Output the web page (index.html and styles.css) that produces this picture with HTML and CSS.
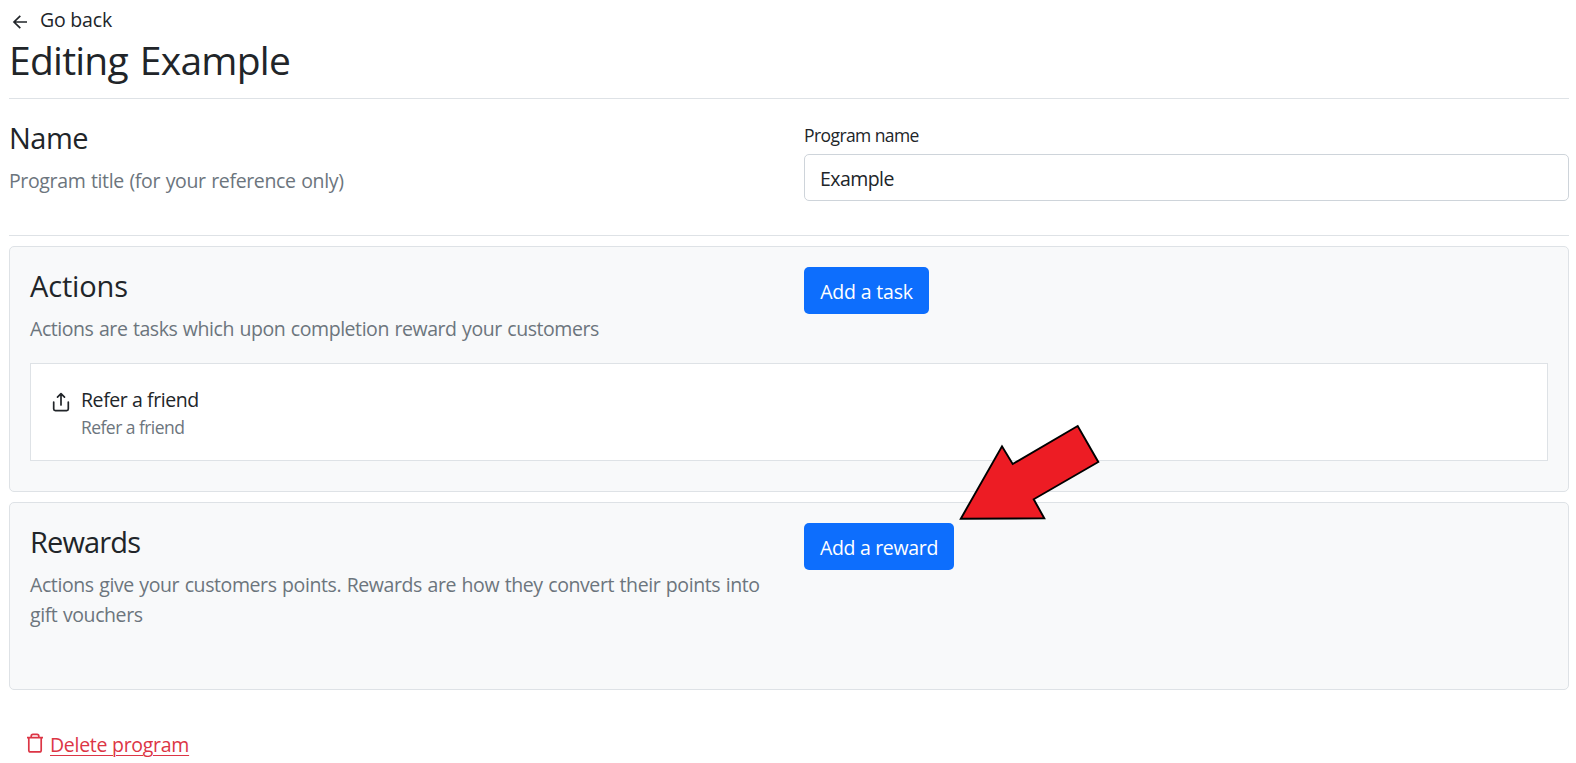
FILE: index.html
```html
<!DOCTYPE html>
<html lang="en">
<head>
<meta charset="utf-8">
<title>Editing Example</title>
<link rel="stylesheet" href="styles.css">
</head>
<body>
<main class="page">
  <header class="page-header">
    <a class="back" href="#">
      <svg class="back-icon" width="16" height="16" viewBox="0 0 16 16" fill="none" stroke="currentColor" stroke-width="1.7"><path d="M15 8H2.2M8.3 1.8 2 8l6.3 6.2"/></svg>
      <span>Go back</span>
    </a>
    <h1 class="page-title">Editing Example</h1>
  </header>

  <section class="name-section columns">
    <div>
      <h2 class="heading heading-name">Name</h2>
      <p class="lead lead-name">Program title (for your reference only)</p>
    </div>
    <div class="field">
      <label class="label" for="program-name">Program name</label>
      <input class="input" id="program-name" type="text" value="Example">
    </div>
  </section>

  <section class="card actions">
    <div class="columns">
      <div>
        <h2 class="heading">Actions</h2>
        <p class="lead">Actions are tasks which upon completion reward your customers</p>
      </div>
      <div><button class="button button-task" type="button">Add a task</button></div>
    </div>
    <div class="task">
      <svg class="task-icon" width="18" height="20" viewBox="0 0 18 20" fill="none" stroke="currentColor" stroke-width="1.7" stroke-linecap="round" stroke-linejoin="round"><path d="M9 13V2M5.5 5.2 9 1.7l3.5 3.5M1.7 10v7q0 1.6 1.6 1.6h11.4q1.6 0 1.6-1.6v-7"/></svg>
      <div>
        <div class="task-title">Refer a friend</div>
        <div class="task-note">Refer a friend</div>
      </div>
    </div>
  </section>

  <section class="card rewards">
    <div class="columns">
      <div>
        <h2 class="heading heading-rewards">Rewards</h2>
        <p class="lead lead-rewards">Actions give your customers points. Rewards are how they convert their points into gift vouchers</p>
      </div>
      <div><button class="button button-reward" type="button">Add a reward</button></div>
    </div>
  </section>

  <a class="delete" href="#">
    <svg class="delete-icon" width="18" height="20" viewBox="0 0 18 20" fill="none" stroke="currentColor" stroke-width="1.7"><path d="M1 4.6h16M5.2 4.4V3.2q0-1.8 1.8-1.8h4q1.8 0 1.8 1.8v1.2M2.8 4.8v12.4q0 1.7 1.7 1.7h9q1.7 0 1.7-1.7V4.8"/></svg>
    <span class="delete-text">Delete program</span>
  </a>
</main>
<svg class="pointer" width="142" height="98" viewBox="958 423 142 98"><path d="M960.8 518.7 1002 446.3l10.7 17.7 65-38 20.6 36-64.6 37.3 10.6 19Z" fill="#ed1c24" stroke="#000" stroke-width="1.9"/></svg>
</body>
</html>
```
FILE: styles.css
```css
* { box-sizing: border-box; }
body {
  margin: 0;
  background: #fff;
  color: #212529;
  font-family: "Open Sans", "Noto Sans", sans-serif;
  font-size: 19.5px;
  line-height: 30px;
  overflow: hidden;
}
h1, h2, p { margin: 0; font-weight: 400; }
.page { padding: 0 7px 0 9px; }
.page-header { height: 99px; padding-top: 5px; border-bottom: 1px solid #dee2e6; }
.back {
  display: flex;
  align-items: center;
  gap: 12px;
  height: 30px;
  padding-left: 3px;
  color: inherit;
  text-decoration: none;
  letter-spacing: -0.2px;
}
.back-icon { margin-top: 3px; }
.page-title {
  font-size: 39px;
  line-height: 48px;
  margin-top: 1px;
  letter-spacing: -0.75px;
  word-spacing: 2.5px;
}
.columns { display: grid; grid-template-columns: 1fr 1fr; column-gap: 30px; }
.name-section { height: 137px; padding-top: 20px; border-bottom: 1px solid #dee2e6; }
.heading { font-size: 29px; line-height: 38px; letter-spacing: -0.15px; }
.heading-name { letter-spacing: -0.5px; }
.heading-rewards { letter-spacing: -0.85px; }
.lead { margin-top: 9px; color: #6c757d; letter-spacing: -0.44px; word-spacing: 0.9px; }
.lead-name { letter-spacing: -0.36px; }
.lead-rewards { letter-spacing: -0.41px; }
.field { display: flex; flex-direction: column; padding-top: 3px; }
.label { font-size: 17.5px; line-height: 26px; letter-spacing: -0.58px; }
.input {
  height: 47px;
  margin-top: 6px;
  padding: 2px 15px 0;
  border: 1px solid #ced4da;
  border-radius: 5px;
  font: inherit;
  letter-spacing: -0.55px;
  color: inherit;
  background: #fff;
}
.card {
  margin-top: 10px;
  padding: 20px;
  border: 1px solid #dee2e6;
  border-radius: 5px;
  background: #f8f9fa;
}
.actions { height: 246px; }
.rewards { height: 188px; }
.button {
  height: 47px;
  padding: 2px 0 0;
  border: 0;
  border-radius: 5px;
  background: #0d6efd;
  color: #fff;
  font: inherit;
}
.button-task { width: 125px; letter-spacing: -0.18px; }
.button-reward { width: 150px; letter-spacing: -0.32px; }
.task {
  display: flex;
  gap: 11px;
  height: 98px;
  margin-top: 19px;
  padding: 21px 21px 0;
  border: 1px solid #dee2e6;
  background: #fff;
}
.task-icon { margin-top: 7px; }
.task-title { line-height: 30px; letter-spacing: -0.42px; }
.task-note { font-size: 17.5px; line-height: 26px; margin-top: -1px; color: #6c757d; letter-spacing: -0.55px; }
.delete {
  display: flex;
  width: max-content;
  gap: 6px;
  margin-top: 40px;
  padding-left: 17px;
  color: #dc3545;
  text-decoration: none;
  letter-spacing: -0.28px;
}
.delete-icon { margin-top: 3px; }
.delete-text { text-decoration: underline; text-decoration-thickness: 1px; text-underline-offset: 3px; }
.pointer { position: absolute; left: 958px; top: 423px; }
```
